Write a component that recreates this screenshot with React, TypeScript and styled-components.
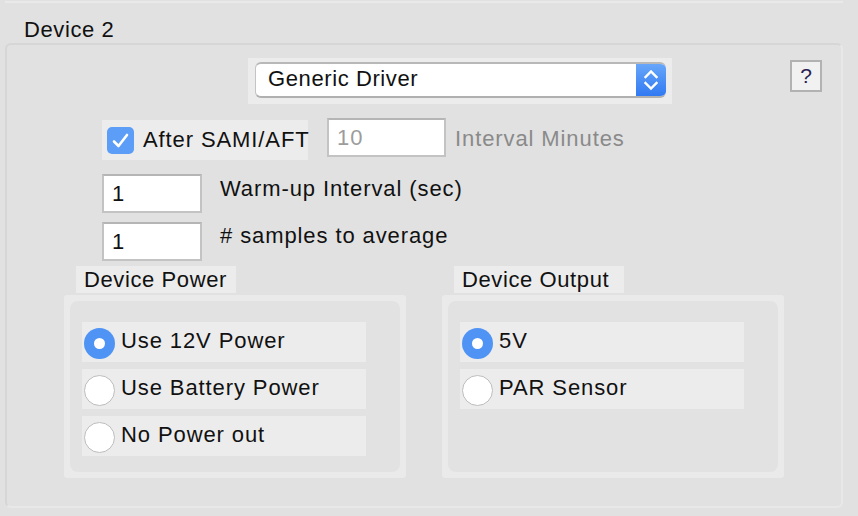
import React from "react";
import styled, { createGlobalStyle } from "styled-components";

const GlobalStyle = createGlobalStyle`
  html, body {
    margin: 0;
    padding: 0;
    background: #e1e1e1;
  }
  * { box-sizing: border-box; }
`;

const Page = styled.div`
  width: 858px;
  height: 516px;
  overflow: hidden;
  background: #e1e1e1;
  font-family: "Liberation Sans", Arial, sans-serif;
  font-size: 22px;
  letter-spacing: 0.9px;
  color: #111;
  display: flex;
  flex-direction: column;
`;

const TopEdge = styled.div`
  margin-left: 5px;
  width: 838px;
  height: 3px;
  border-bottom: 2px solid #e9e9e9;
`;

const Title = styled.div`
  margin: 14px 0 0 24px;
  height: 26px;
  line-height: 26px;
  letter-spacing: 0.6px;
`;

const GroupBox = styled.div`
  margin: 0 0 0 5px;
  width: 838px;
  height: 465px;
  border-radius: 6px;
  border-top: 2px solid #d6d6d6;
  border-left: 2px solid #d6d6d6;
  border-right: 2px solid #e8e8e8;
  border-bottom: 2px solid #e8e8e8;
  display: flex;
  flex-direction: column;
`;

const PopupRow = styled.div`
  display: flex;
  align-items: flex-start;
  margin-top: 13px;
  padding-left: 241px;
`;

const PopupWell = styled.div`
  width: 424px;
  height: 46px;
  background: #ececec;
  padding: 4px 6px 0 7px;
`;

const Popup = styled.div`
  width: 411px;
  height: 36px;
  display: flex;
  background: #fff;
  border-radius: 6px;
  border-top: 2px solid #b8b8b8;
  border-bottom: 2px solid #b0b0b0;
  border-left: 1px solid #c4c4c4;
  overflow: hidden;
`;

const PopupText = styled.div`
  flex: 1;
  padding-left: 12px;
  line-height: 30px;
  letter-spacing: 0.6px;
`;

const Stepper = styled.div`
  width: 30px;
  margin: -2px 0;
  background: linear-gradient(#6aa9fa, #2e77f2);
  border-radius: 0 6px 6px 0;
  display: flex;
  align-items: center;
  justify-content: center;
`;

const HelpButton = styled.div`
  margin: 2px 0 0 118px;
  width: 32px;
  height: 32px;
  border: 2px solid #b2b2b2;
  background: #f1f1f1;
  display: flex;
  align-items: center;
  justify-content: center;
  font-size: 21px;
  color: #2a1d55;
  letter-spacing: 0;
`;

const OptionRow = styled.div<{ top: number }>`
  display: flex;
  align-items: flex-start;
  margin-top: ${(p) => p.top}px;
  padding-left: 95px;
`;

const CheckWell = styled.label`
  margin-top: 2px;
  width: 206px;
  height: 40px;
  background: #ececec;
  display: flex;
  align-items: center;
  padding-left: 5px;
  gap: 9px;
  white-space: nowrap;
`;

const CheckBox = styled.span`
  flex: none;
  width: 27px;
  height: 27px;
  border-radius: 5px;
  background: #5b9df7;
  display: flex;
  align-items: center;
  justify-content: center;
`;

const FieldBox = styled.div<{ width: number; offset: number; muted?: boolean }>`
  width: ${(p) => p.width}px;
  height: 39px;
  margin-left: ${(p) => p.offset}px;
  background: #fff;
  border: 2px solid #c3c3c3;
  border-top-color: #b5b5b5;
  padding-left: 8px;
  line-height: 35px;
  color: ${(p) => (p.muted ? "#9c9c9c" : "#111")};
`;

const FieldLabel = styled.div<{ offset: number; drop: number; muted?: boolean }>`
  margin-left: ${(p) => p.offset}px;
  margin-top: ${(p) => p.drop}px;
  line-height: 26px;
  color: ${(p) => (p.muted ? "#8a8a8a" : "#111")};
`;

const GroupsRow = styled.div`
  display: flex;
  gap: 36px;
  margin-top: 5px;
  padding-left: 57px;
`;

const GroupColumn = styled.div`
  display: flex;
  flex-direction: column;
`;

const GroupLabel = styled.div<{ width: number }>`
  margin-left: 12px;
  width: ${(p) => p.width}px;
  height: 27px;
  line-height: 27px;
  background: #ececec;
  padding-left: 8px;
  letter-spacing: 0.6px;
`;

const GroupFrame = styled.div`
  margin-top: 2px;
  width: 342px;
  height: 183px;
  background: #eaeaea;
  border-radius: 3px;
  padding: 6px;
`;

const GroupInner = styled.div`
  height: 100%;
  background: #e2e2e2;
  border-radius: 8px;
  padding: 21px 0 0 12px;
  display: flex;
  flex-direction: column;
  gap: 7px;
`;

const RadioRow = styled.label`
  width: 284px;
  height: 40px;
  background: #ececec;
  display: flex;
  align-items: center;
  padding-left: 2px;
  gap: 6px;
`;

const RadioCircle = styled.span<{ selected?: boolean }>`
  width: 31px;
  height: 31px;
  border-radius: 50%;
  margin-top: 2px;
  background: ${(p) => (p.selected ? "#4f94f5" : "#fff")};
  border: ${(p) => (p.selected ? "none" : "1.5px solid #bdbdbd")};
  display: flex;
  align-items: center;
  justify-content: center;
  &::after {
    content: "";
    display: ${(p) => (p.selected ? "block" : "none")};
    width: 11px;
    height: 11px;
    border-radius: 50%;
    background: #fff;
  }
`;

const RadioText = styled.span`
  line-height: 26px;
  margin-top: -2px;
`;

const Chevrons = () => (
  <svg width="16" height="24" viewBox="0 0 16 24" fill="none" stroke="#fff" strokeWidth="2.4" strokeLinecap="square">
    <path d="M2.5 9 L8 3.5 L13.5 9" />
    <path d="M2.5 15 L8 20.5 L13.5 15" />
  </svg>
);

const Check = () => (
  <svg width="19" height="17" viewBox="0 0 19 17" fill="none" stroke="#fff" strokeWidth="2.6" strokeLinecap="round" strokeLinejoin="round">
    <path d="M3 9.5 L7.5 14 L16 3" />
  </svg>
);

type Opt = { label: string; selected?: boolean };

const powerOptions: Opt[] = [
  { label: "Use 12V Power", selected: true },
  { label: "Use Battery Power" },
  { label: "No Power out" },
];

const outputOptions: Opt[] = [{ label: "5V", selected: true }, { label: "PAR Sensor" }];

const RadioGroup = ({ title, width, options }: { title: string; width: number; options: Opt[] }) => (
  <GroupColumn>
    <GroupLabel width={width}>{title}</GroupLabel>
    <GroupFrame>
      <GroupInner>
        {options.map((o) => (
          <RadioRow key={o.label}>
            <RadioCircle selected={o.selected} />
            <RadioText>{o.label}</RadioText>
          </RadioRow>
        ))}
      </GroupInner>
    </GroupFrame>
  </GroupColumn>
);

export default function App() {
  return (
    <Page>
      <GlobalStyle />
      <TopEdge />
      <Title>Device 2</Title>
      <GroupBox>
        <PopupRow>
          <PopupWell>
            <Popup>
              <PopupText>Generic Driver</PopupText>
              <Stepper>
                <Chevrons />
              </Stepper>
            </Popup>
          </PopupWell>
          <HelpButton>?</HelpButton>
        </PopupRow>
        <OptionRow top={14}>
          <CheckWell>
            <CheckBox>
              <Check />
            </CheckBox>
            <span>After SAMI/AFT</span>
          </CheckWell>
          <FieldBox width={119} offset={19} muted>
            10
          </FieldBox>
          <FieldLabel offset={9} drop={8} muted>
            Interval Minutes
          </FieldLabel>
        </OptionRow>
        <OptionRow top={14}>
          <FieldBox width={100} offset={0}>1</FieldBox>
          <FieldLabel offset={18} drop={2}>Warm-up Interval (sec)</FieldLabel>
        </OptionRow>
        <OptionRow top={9}>
          <FieldBox width={100} offset={0}>1</FieldBox>
          <FieldLabel offset={18} drop={1}># samples to average</FieldLabel>
        </OptionRow>
        <GroupsRow>
          <RadioGroup title="Device Power" width={160} options={powerOptions} />
          <RadioGroup title="Device Output" width={170} options={outputOptions} />
        </GroupsRow>
      </GroupBox>
    </Page>
  );
}
